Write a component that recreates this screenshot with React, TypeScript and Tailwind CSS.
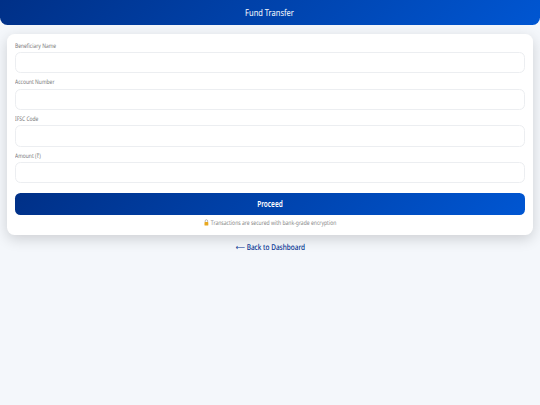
import React from "react";

const fields = ["Beneficiary Name", "Account Number", "IFSC Code", "Amount (₹)"];

export default function App() {
  return (
    <div className="min-h-[405px] bg-[#f4f7fb] font-['Noto_Sans',sans-serif] [text-rendering:geometricPrecision]">
      <header className="flex h-[25px] items-center justify-center rounded-b-[7.5px] bg-[linear-gradient(135deg,#003087,#0056d2)] pt-[1px] text-white">
        <span className="scale-x-[0.8] text-[9.4px] leading-[12px]">Fund Transfer</span>
      </header>

      <main className="mx-[7px] mt-[9px] rounded-[7.5px] bg-white px-[8px] pt-[7.67px] pb-[8px] shadow-[0_4px_14px_rgba(0,0,0,0.16)]">
        <form className="flex flex-col gap-[5px]">
          {fields.map((label) => (
            <div key={label} className="flex flex-col">
              <label className="mb-[2.33px] h-[8px] origin-left scale-x-[0.8] text-[6.2px] leading-[8px] text-[#777]">{label}</label>
              <input
                type="text"
                className="h-[21.33px] w-full rounded-[5.5px] border border-[#eceef1] bg-white outline-none"
              />
            </div>
          ))}
          <button
            type="button"
            className="mt-[5px] flex h-[21.33px] w-full items-center justify-center rounded-[5.5px] bg-[linear-gradient(135deg,#003087,#0056d2)] text-white"
          >
            <span className="scale-x-[0.8] text-[8.1px] leading-[12px] font-semibold">Proceed</span>
          </button>
        </form>
        <p className="mt-[4px] flex h-[8px] scale-x-[0.8] items-center justify-center gap-[2px] text-[6.3px] leading-[8px] text-[#888]">
          <svg width="7" height="7" viewBox="0 0 16 16">
            <path d="M4.5 7V5a3.5 3.5 0 0 1 7 0v2" fill="none" stroke="#9e9e9e" strokeWidth="1.8" />
            <rect x="2.5" y="7" width="11" height="8" rx="1.5" fill="#e8a820" />
          </svg>
          Transactions are secured with bank-grade encryption
        </p>
      </main>

      <div className="mt-[7px] flex h-[12px] justify-center">
        <a className="scale-x-[0.8] text-[8.1px] leading-[12px] font-medium text-[#00308f]">⟵ Back to Dashboard</a>
      </div>
    </div>
  );
}
